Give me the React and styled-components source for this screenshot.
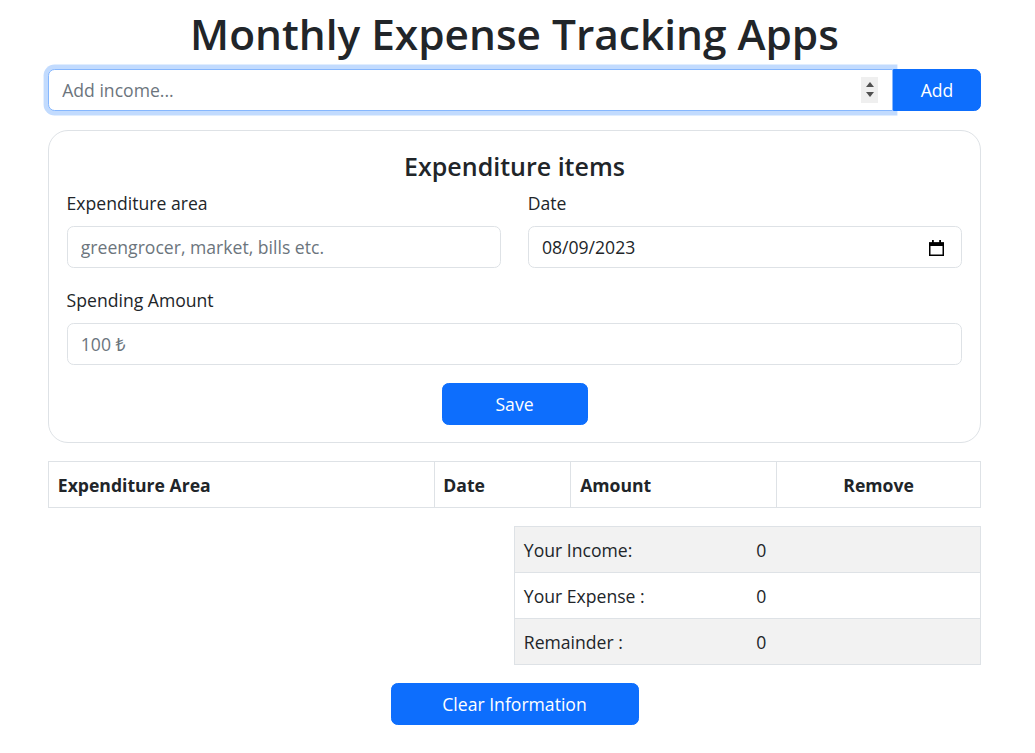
import styled, { createGlobalStyle } from "styled-components";

const GlobalStyle = createGlobalStyle`
  body {
    margin: 0;
    background: #fff;
    color: #212529;
    font-family: "Open Sans", "Noto Sans", sans-serif;
    font-size: 17.6px;
    line-height: 1.5;
  }
  * { box-sizing: border-box; }
`;

const Page = styled.main`
  width: 933px;
  margin-left: 48px;
  padding-top: 8px;
  display: flex;
  flex-direction: column;
`;

const Title = styled.h1`
  margin: 0 0 8px;
  text-align: center;
  font-size: 42.4px;
  line-height: 52.8px;
  font-weight: 600;
`;

const IncomeGroup = styled.div`
  display: flex;
  height: 42px;
`;

const IncomeField = styled.div`
  position: relative;
  flex: 1;
  display: flex;
`;

const IncomeInput = styled.input`
  flex: 1;
  font: inherit;
  color: #212529;
  border: 1px solid #86b7fe;
  border-radius: 6.6px 0 0 6.6px;
  padding: 0 13.2px;
  outline: none;
  box-shadow: 0 0 0 4.4px rgba(13, 110, 253, 0.25);
  &::placeholder { color: #6c757d; }
`;

const Spinner = styled.div`
  position: absolute;
  right: 15px;
  top: 8px;
  width: 17px;
  height: 26px;
  background: #efefef;
  display: flex;
  flex-direction: column;
  align-items: center;
  justify-content: center;
  gap: 5px;
`;

const Arrow = styled.span`
  width: 0;
  height: 0;
  border-left: 4px solid transparent;
  border-right: 4px solid transparent;
  ${(p) => (p.$up ? "border-bottom: 5px solid #505050;" : "border-top: 5px solid #505050;")}
`;

const Button = styled.button`
  font: inherit;
  color: #fff;
  background: #0d6efd;
  border: 1px solid #0d6efd;
  border-radius: ${(p) => (p.$attached ? "0 6.6px 6.6px 0" : "6.6px")};
  width: ${(p) => p.$width}px;
  height: 42px;
  padding: 0;
  cursor: pointer;
  align-self: ${(p) => (p.$attached ? "stretch" : "center")};
`;

const Card = styled.section`
  margin-top: 19px;
  border: 1px solid #dee2e6;
  border-radius: 20px;
  padding: 17.6px;
  display: flex;
  flex-direction: column;
`;

const CardTitle = styled.h3`
  margin: 0 0 6px;
  text-align: center;
  font-size: 25px;
  line-height: 36px;
  font-weight: 600;
`;

const Row = styled.div`
  display: grid;
  grid-template-columns: ${(p) => (p.$cols === 2 ? "1fr 1fr" : "1fr")};
  column-gap: 26.4px;
  margin-bottom: 18.3px;
`;

const Field = styled.div`
  position: relative;
  display: flex;
  flex-direction: column;
`;

const Label = styled.label`
  line-height: 26.4px;
  margin-bottom: 9.5px;
`;

const Input = styled.input`
  font: inherit;
  color: #212529;
  height: 42px;
  border: 1px solid #dee2e6;
  border-radius: 6.6px;
  padding: 0 13.2px;
  outline: none;
  &::placeholder { color: #6c757d; }
`;

const CalendarIcon = styled.svg`
  position: absolute;
  right: 18px;
  bottom: 12px;
`;

const Table = styled.table`
  margin-top: ${(p) => p.$gap}px;
  width: ${(p) => p.$width}px;
  align-self: flex-end;
  border-collapse: collapse;
  border: 1px solid #dee2e6;
`;

const Th = styled.th`
  text-align: ${(p) => p.$align || "left"};
  font-weight: 700;
  padding: 9.3px 8.8px;
  line-height: 26.4px;
  border: 1px solid #dee2e6;
  width: ${(p) => p.$w}px;
`;

const SumRow = styled.tr`
  background: ${(p) => (p.$striped ? "#f2f2f2" : "#fff")};
  border-bottom: 1px solid #dee2e6;
`;

const Td = styled.td`
  padding: 9.3px 8.8px;
  line-height: 26.4px;
  width: 50%;
`;

const Footer = styled.div`
  display: flex;
  justify-content: center;
  margin-top: 18px;
`;

const summary = [
  ["Your Income:", 0],
  ["Your Expense :", 0],
  ["Remainder :", 0],
];

export default function App() {
  return (
    <>
      <GlobalStyle />
      <Page>
        <Title>Monthly Expense Tracking Apps</Title>
        <IncomeGroup>
          <IncomeField>
            <IncomeInput placeholder="Add income..." />
            <Spinner>
              <Arrow $up />
              <Arrow />
            </Spinner>
          </IncomeField>
          <Button $attached $width={88}>Add</Button>
        </IncomeGroup>

        <Card>
          <CardTitle>Expenditure items</CardTitle>
          <Row $cols={2}>
            <Field>
              <Label>Expenditure area</Label>
              <Input placeholder="greengrocer, market, bills etc." />
            </Field>
            <Field>
              <Label>Date</Label>
              <Input defaultValue="08/09/2023" readOnly />
              <CalendarIcon width="15" height="16" viewBox="0 0 15 16">
                <rect x="0.75" y="3" width="13.5" height="12.25" fill="none" stroke="#000" strokeWidth="1.5" />
                <rect x="0" y="2.5" width="15" height="3.5" fill="#000" />
                <rect x="3" y="0" width="1.8" height="3" fill="#000" />
                <rect x="10.2" y="0" width="1.8" height="3" fill="#000" />
              </CalendarIcon>
            </Field>
          </Row>
          <Row $cols={1}>
            <Field>
              <Label>Spending Amount</Label>
              <Input placeholder="100 ₺" />
            </Field>
          </Row>
          <Button $width={146}>Save</Button>
        </Card>

        <Table $width={933} $gap={18}>
          <thead>
            <tr>
              <Th $w={386}>Expenditure Area</Th>
              <Th $w={137}>Date</Th>
              <Th $w={206}>Amount</Th>
              <Th $w={204} $align="center">Remove</Th>
            </tr>
          </thead>
        </Table>

        <Table $width={467} $gap={18}>
          <tbody>
            {summary.map(([label, value], i) => (
              <SumRow key={label} $striped={i % 2 === 0}>
                <Td>{label}</Td>
                <Td>{value}</Td>
              </SumRow>
            ))}
          </tbody>
        </Table>

        <Footer>
          <Button $width={248}>Clear Information</Button>
        </Footer>
      </Page>
    </>
  );
}
